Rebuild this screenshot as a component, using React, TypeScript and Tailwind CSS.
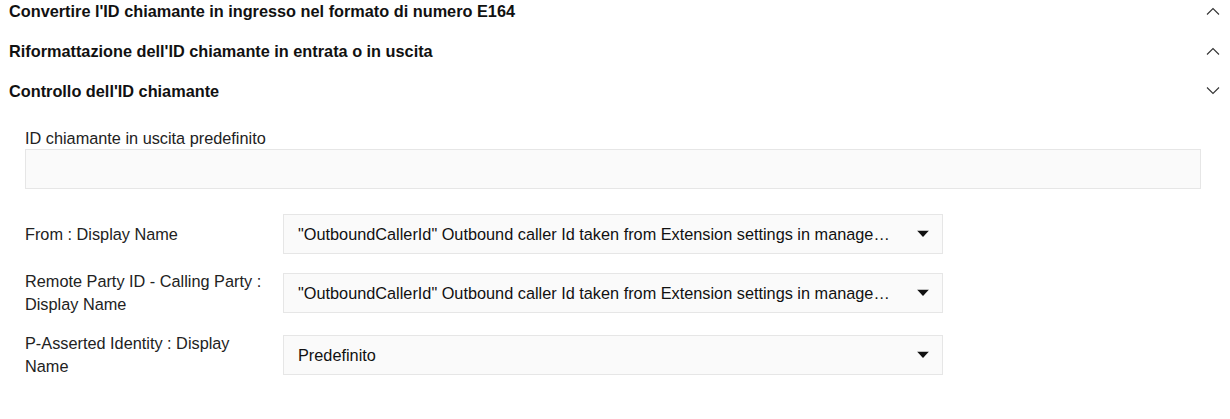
import React from 'react';

const sections = [
  { title: "Convertire l'ID chiamante in ingresso nel formato di numero E164", open: false },
  { title: "Riformattazione dell'ID chiamante in entrata o in uscita", open: false },
];

const fields = [
  { label: 'From : Display Name', value: '"OutboundCallerId" Outbound caller Id taken from Extension settings in management console' },
  { label: 'Remote Party ID - Calling Party : Display Name', value: '"OutboundCallerId" Outbound caller Id taken from Extension settings in management console' },
  { label: 'P-Asserted Identity : Display Name', value: 'Predefinito' },
];

function Chevron({ up }: { up: boolean }) {
  return (
    <svg width="14" height="8" viewBox="0 0 14 8" className="shrink-0">
      <path d={up ? 'M1 7.5 L7 1.5 L13 7.5' : 'M1 0.5 L7 6.5 L13 0.5'} fill="none" stroke="#333" strokeWidth="1.1" />
    </svg>
  );
}

function Header({ title, up }: { title: string; up: boolean }) {
  return (
    <div className="flex items-center justify-between h-[40px] pl-[9px] pr-[10px] cursor-pointer">
      <span className="text-[16.3px] font-bold text-[#111]">{title}</span>
      <Chevron up={up} />
    </div>
  );
}

export default function App() {
  return (
    <div className="w-[1230px] h-[419px] overflow-hidden bg-white font-['Liberation_Sans',Arial,sans-serif] text-[#222]">
      <div className="-mt-[9px]">
        {sections.map((s) => (
          <Header key={s.title} title={s.title} up={!s.open} />
        ))}
        <Header title="Controllo dell'ID chiamante" up={false} />

        <div className="pl-[25px] pr-[29px] pt-[17px]">
          <label className="block text-[16.3px] leading-[21px]">ID chiamante in uscita predefinito</label>
          <input className="block w-full h-[40px] bg-[#fafafa] border border-[#e6e6e6] outline-none px-[14px] text-[16px]" />

          <div className="mt-[25px]">
            {fields.map((f) => (
              <div key={f.label} className="flex items-center mb-[16px]">
                <div className="w-[258px] pr-[15px] shrink-0 text-[16.3px] leading-[23px]">{f.label}</div>
                <div className="relative w-[660px] h-[40px] bg-[#fafafa] border border-[#e6e6e6] flex items-center pl-[14px] pr-[52px]">
                  <span className="truncate text-[16.3px] text-[#111]">{f.value}</span>
                  <svg width="12" height="7" viewBox="0 0 12 7" className="absolute right-[13px] top-1/2 -translate-y-1/2">
                    <path d="M0 0 L12 0 L6 6.5 Z" fill="#111" />
                  </svg>
                </div>
              </div>
            ))}
          </div>
        </div>
      </div>
    </div>
  );
}
